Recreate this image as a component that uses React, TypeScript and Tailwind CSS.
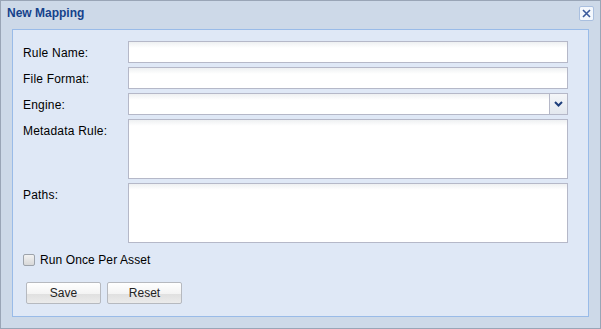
export default function App() {
  const rows = [
    { label: 'Rule Name:', kind: 'text' },
    { label: 'File Format:', kind: 'text' },
    { label: 'Engine:', kind: 'combo' },
    { label: 'Metadata Rule:', kind: 'area' },
    { label: 'Paths:', kind: 'area' },
  ];

  return (
    <div className="w-[601px] h-[329px] bg-[#cdd9e8] border border-[#99a5b6] flex flex-col font-['Liberation_Sans',Arial,sans-serif] text-[12px] text-black">
      {/* Title bar */}
      <div className="h-[28px] flex items-start justify-between pl-[6px] pr-[6px] pt-[5px]">
        <span className="font-bold text-[#15428b] text-[12px] leading-[15px]">New Mapping</span>
        <button className="w-[15px] h-[15px] rounded-[2px] border border-[#a9bfdf] bg-[#f4f8fd] flex items-center justify-center">
          <svg width="9" height="9" viewBox="0 0 9 9">
            <path d="M1 1l7 7M8 1l-7 7" stroke="#3a5a9c" strokeWidth="1.6" />
          </svg>
        </button>
      </div>

      {/* Body panel */}
      <div className="mx-[11px] h-[288px] bg-[#dfe8f6] border border-[#99bbe8] pt-[11px] pl-[10px] pr-[20px]">
        <div className="flex flex-col gap-[4px]">
          {rows.map((row, i) => (
            <div key={i} className="flex">
              <div className="w-[105px] pt-[3px] text-[12px] tracking-[0.2px]">{row.label}</div>
              {row.kind === 'text' && (
                <div className="flex-1 h-[22px] border border-[#b5b8c8] bg-gradient-to-b from-[#eef0f2] to-white to-[30%]" />
              )}
              {row.kind === 'combo' && (
                <div className="flex-1 h-[22px] flex border border-[#b5b8c8]">
                  <div className="flex-1 bg-gradient-to-b from-[#eef0f2] to-white to-[30%]" />
                  <div className="w-[18px] border-l border-[#b5b8c8] bg-gradient-to-b from-[#f4f6f9] to-[#e3e8ef] flex items-center justify-center">
                    <svg width="9" height="6" viewBox="0 0 9 6">
                      <path d="M1 1l3.5 3.5L8 1" stroke="#1e3f7c" strokeWidth="2" fill="none" />
                    </svg>
                  </div>
                </div>
              )}
              {row.kind === 'area' && (
                <div className="flex-1 h-[60px] border border-[#b5b8c8] bg-gradient-to-b from-[#eef0f2] to-white to-[10%]" />
              )}
            </div>
          ))}
        </div>

        <label className="flex items-center gap-[5px] mt-[10px] h-[13px]">
          <span className="w-[12px] h-[12px] rounded-[2px] border border-[#9da3ab] bg-gradient-to-b from-[#f2f2f2] to-[#d8d8d8]" />
          <span className="text-[12px] tracking-[0.1px]">Run Once Per Asset</span>
        </label>

        <div className="flex gap-[6px] mt-[16px] ml-[3px]">
          {['Save', 'Reset'].map((b) => (
            <button
              key={b}
              className="w-[75px] h-[22px] rounded-[2px] border border-[#b6b9bf] bg-[linear-gradient(to_bottom,#ffffff_0%,#f3f3f3_55%,#e0e0e0_56%,#ebebeb_100%)] text-[12px] text-[#222]"
            >
              {b}
            </button>
          ))}
        </div>
      </div>
    </div>
  );
}
